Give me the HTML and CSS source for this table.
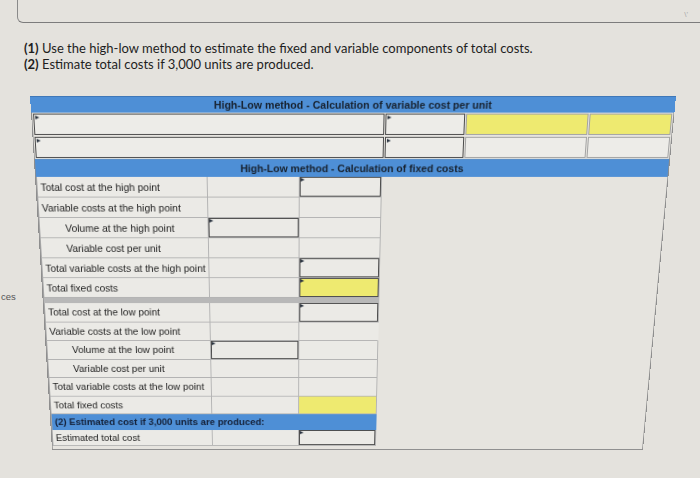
FILE: index.html
```html
<!DOCTYPE html>
<html lang="en">
<head>
<meta charset="utf-8">
<title>High-Low method</title>
<link rel="stylesheet" href="styles.css">
</head>
<body>
<div class="topbar"><span class="mark">\'</span></div>
<div class="main">
  <div class="gutter"><span class="gtext">ces</span></div>
  <div class="content">
    <div class="question">
      <p><b>(1)</b> Use the high-low method to estimate the fixed and variable components of total costs.</p>
      <p><b>(2)</b> Estimate total costs if 3,000 units are produced.</p>
    </div>
    <section class="frame">
      <div class="hdr">High-Low method - Calculation of variable cost per unit</div>
      <div class="vrow">
        <div class="vc inp"></div>
        <div class="vc inp"></div>
        <div class="vc yel"></div>
        <div class="vc yel"></div>
      </div>
      <div class="vrow">
        <div class="vc inp"></div>
        <div class="vc inp"></div>
        <div class="vc"></div>
        <div class="vc"></div>
      </div>
      <div class="hdr hdr2">High-Low method - Calculation of fixed costs</div>

      <div class="frow hi"><div class="c lab">Total cost at the high point</div><div class="c"></div><div class="c inp"></div></div>
      <div class="frow hi"><div class="c lab">Variable costs at the high point</div><div class="c"></div><div class="c"></div></div>
      <div class="frow hi"><div class="c lab ind">Volume at the high point</div><div class="c inp"></div><div class="c"></div></div>
      <div class="frow hi"><div class="c lab ind">Variable cost per unit</div><div class="c"></div><div class="c"></div></div>
      <div class="frow hi"><div class="c lab">Total variable costs at the high point</div><div class="c"></div><div class="c inp"></div></div>
      <div class="frow hi"><div class="c lab">Total fixed costs</div><div class="c"></div><div class="c inp yel"></div></div>
      <div class="sep"></div>
      <div class="frow lo"><div class="c lab">Total cost at the low point</div><div class="c"></div><div class="c inp"></div></div>
      <div class="frow lo"><div class="c lab">Variable costs at the low point</div><div class="c"></div><div class="c open"></div></div>
      <div class="frow lo"><div class="c lab ind">Volume at the low point</div><div class="c inp"></div><div class="c"></div></div>
      <div class="frow lo"><div class="c lab ind">Variable cost per unit</div><div class="c"></div><div class="c"></div></div>
      <div class="frow lo"><div class="c lab">Total variable costs at the low point</div><div class="c"></div><div class="c"></div></div>
      <div class="frow lo"><div class="c lab">Total fixed costs</div><div class="c"></div><div class="c yel"></div></div>
      <div class="brow">(2) Estimated cost if 3,000 units are produced:</div>
      <div class="frow est"><div class="c lab">Estimated total cost</div><div class="c"></div><div class="c inp"></div></div>
    </section>
  </div>
</div>
</body>
</html>
```

FILE: styles.css
```css
html {
  background: #e4e2dd;
}
body {
  margin: 0;
  min-height: 478px;
  box-sizing: border-box;
  background: #e4e2dd;
  border-bottom: 2px solid #d2d0cb;
  font-family: "Liberation Sans", Arial, sans-serif;
  color: #222;
  overflow: hidden;
}
.topbar {
  height: 22px;
  margin-left: 17px;
  margin-right: -10px;
  border-left: 1px solid #8a8a8a;
  border-bottom: 1px solid #7c7c7c;
  border-bottom-left-radius: 6px;
  display: flex;
  justify-content: flex-end;
}
.mark {
  font-size: 8px;
  color: #aaa;
  margin: 10px 22px 0 0;
}
.main {
  display: flex;
}
.gutter {
  width: 17px;
  flex: none;
  padding-top: 268px;
}
.gtext {
  display: block;
  font-size: 9.5px;
  line-height: 12px;
  color: #555;
  padding-left: 1px;
}
.content {
  padding-left: 7px;
}
.question {
  margin-top: 17px;
  font-family: Lato, "Open Sans", sans-serif;
  font-size: 13px;
  line-height: 16px;
  color: #1e1e1e;
}
.question p {
  margin: 0;
}
.frame {
  margin-top: 24px;
  margin-left: 6px;
  width: 646px;
  height: 394px;
  box-sizing: border-box;
  border: 1px solid #8e8e8e;
  border-top: none;
  background: #e6e4df;
  transform-origin: 258px 0;
  transform: perspective(800px) rotateX(-10.9deg);
}
.hdr {
  height: 17px;
  margin: 0 -1px;
  background: #4e8fd6;
  border-top: 1px solid #3f78b8;
  box-sizing: border-box;
  text-align: center;
  font-weight: bold;
  font-size: 10.6px;
  line-height: 16px;
  color: #17212e;
}
.hdr2 {
  height: 19px;
  margin: 0;
  border-top: 1px solid #5d8fc6;
  line-height: 18px;
}
.vrow {
  display: grid;
  grid-template-columns: 354px 81px 124px 84px;
  height: 24px;
  box-sizing: border-box;
  padding: 1px 0 1px 1px;
}
.vc {
  position: relative;
  background: #edece8;
  border: 1px solid #a2a2a2;
  margin-right: 1px;
}
.vc.inp {
  border-color: #4a4a4a;
}
.yel {
  background: #eeea70 !important;
}
.inp {
  position: relative;
}
.inp::before {
  content: "";
  position: absolute;
  top: 1px;
  left: 1px;
  border-left: 4px solid #2b3440;
  border-top: 2.5px solid transparent;
  border-bottom: 2.5px solid transparent;
}
.frow {
  display: grid;
  grid-template-columns: 175px 94px 84px;
  width: 353px;
  box-sizing: border-box;
}
.hi {
  height: 22px;
}
.lo {
  height: 21.5px;
}
.est {
  height: 19px;
}
.c {
  background: #ebeae6;
  border-right: 1px solid #b3b3b3;
  border-bottom: 1px solid #b3b3b3;
  box-sizing: border-box;
}
.c.open {
  border-right-color: transparent;
}
.c.lab {
  border-left: 1px solid #a8a8a8;
  padding-left: 3px;
  font-size: 10.5px;
  white-space: nowrap;
  display: flex;
  align-items: center;
  color: #1c1c1c;
}
.c.ind {
  padding-left: 26px;
}
.c.inp {
  box-shadow: inset 0 0 0 1px #4d4d4d;
}
.sep {
  width: 353px;
  height: 6px;
  background: #b8b8b8;
}
.brow {
  width: 353px;
  height: 19px;
  box-sizing: border-box;
  background: #4e8fd6;
  border-left: 1px solid #a8a8a8;
  padding-left: 3px;
  font-weight: bold;
  font-size: 10.4px;
  line-height: 19px;
  color: #15223a;
  white-space: nowrap;
}
```
